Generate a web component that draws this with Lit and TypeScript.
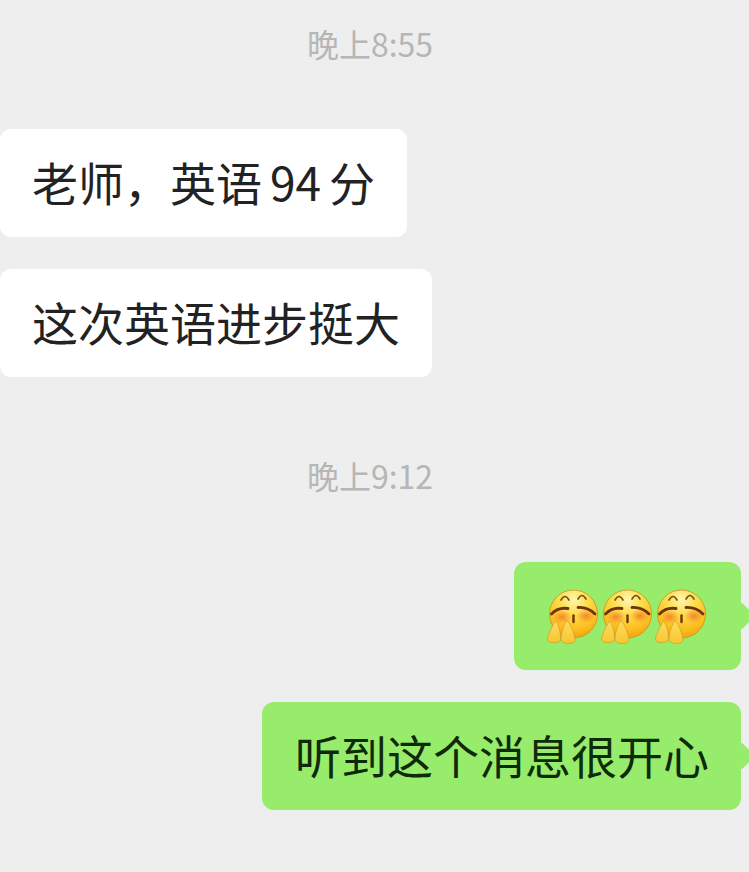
import { LitElement, html, css, svg } from "lit";
import { customElement } from "lit/decorators.js";

const emoji = svg`<svg class="emoji" viewBox="5 3 54 58" width="54" height="58">
  <defs>
    <radialGradient id="face" cx="0.5" cy="0.2" r="0.85">
      <stop offset="0" stop-color="#fff6b0"/>
      <stop offset="0.35" stop-color="#fedd4e"/>
      <stop offset="0.75" stop-color="#fbbd1c"/>
      <stop offset="1" stop-color="#f09a0c"/>
    </radialGradient>
    <radialGradient id="blush">
      <stop offset="0" stop-color="#f27a2c" stop-opacity="0.85"/>
      <stop offset="1" stop-color="#f27a2c" stop-opacity="0"/>
    </radialGradient>
    <linearGradient id="hand" x1="0" y1="0" x2="0" y2="1">
      <stop offset="0" stop-color="#fcdc62"/>
      <stop offset="1" stop-color="#f9c630"/>
    </linearGradient>
    <filter id="soft"><feGaussianBlur stdDeviation="0.4"/></filter>
  </defs>
  <g filter="url(#soft)">
    <circle cx="33.500" cy="30" r="24" fill="url(#face)" stroke="#cf8f1c" stroke-width="0.8"/>
    <ellipse cx="22" cy="33" rx="9.500" ry="7" fill="url(#blush)"/>
    <ellipse cx="46" cy="32" rx="9.500" ry="7" fill="url(#blush)"/>
    <path d="M21 16 Q25 9 29 16 M38 15 Q42 8 46 15" fill="none" stroke="#7a5210" stroke-width="1.700" stroke-linecap="round"/>
    <path d="M11.500 30 Q18 23 28 24.500 M38 23.500 Q48 23 55 30" fill="none" stroke="#6e3608" stroke-width="2.800" stroke-linecap="round"/>
    <path d="M33.500 31.500 V38" fill="none" stroke="#6e3608" stroke-width="2.400" stroke-linecap="round"/>
    <path d="M15.500 37 C12 42 9 49 7.500 54 C7 57 10 58.500 13 58.500 C17 58.500 20 58 20.500 55.500 C21 50 19 41 15.500 37 Z" fill="url(#hand)" stroke="#cf9420" stroke-width="0.6"/>
    <path d="M27 36.500 C23.500 41 21 50 21 55 C21 58 24 59.500 28 59.500 C32 59.500 35.500 58.500 35 55.500 C34.500 50 31 41 27 36.500 Z" fill="url(#hand)" stroke="#cf9420" stroke-width="0.6"/>
  </g>
</svg>`;

@customElement("app-root")
export class AppRoot extends LitElement {
  static styles = css`
    :host {
      display: block;
      width: 749px;
      height: 872px;
      overflow: hidden;
      background: #eeeeee;
      font-family: "Noto Sans CJK SC", "Noto Sans", sans-serif;
    }
    .chat {
      display: flex;
      flex-direction: column;
      align-items: flex-start;
      padding-top: 23px;
    }
    .time {
      align-self: stretch;
      padding-right: 9px;
      text-align: center;
      font-size: 32px;
      line-height: 40px;
      color: #b6b6b6;
    }
    .time.first { margin-bottom: 66px; }
    .time.second { margin-top: 46px; margin-bottom: 67px; }
    .bubble {
      position: relative;
      display: flex;
      align-items: center;
      box-sizing: border-box;
      height: 108px;
      font-size: 46px;
      line-height: 60px;
      color: #222222;
      white-space: nowrap;
      margin-bottom: 32px;
      padding: 0 32px 4px;
    }
    .in {
      background: #fff;
      border-radius: 11px;
    }
    .out {
      align-self: flex-end;
      margin-right: 8px;
      background: #97ec6b;
      color: #0f2a0a;
      border-radius: 12px;
      padding-left: 33px;
    }
    .out::after {
      content: "";
      position: absolute;
      right: -10px;
      top: 44px;
      width: 20px;
      height: 20px;
      background: #97ec6b;
      border-radius: 3px;
      transform: rotate(45deg);
    }
    .emojis {
      padding: 0 34px 0 31px;
    }
    .emoji { display: block; flex: none; }
    .num { margin: 0 8px; }
  `;

  render() {
    return html`<div class="chat">
      <div class="time first">晚上8:55</div>
      <div class="bubble in"><span>老师，英语<span class="num">94</span>分</span></div>
      <div class="bubble in">这次英语进步挺大</div>
      <div class="time second">晚上9:12</div>
      <div class="bubble out emojis">${emoji}${emoji}${emoji}</div>
      <div class="bubble out">听到这个消息很开心</div>
    </div>`;
  }
}
